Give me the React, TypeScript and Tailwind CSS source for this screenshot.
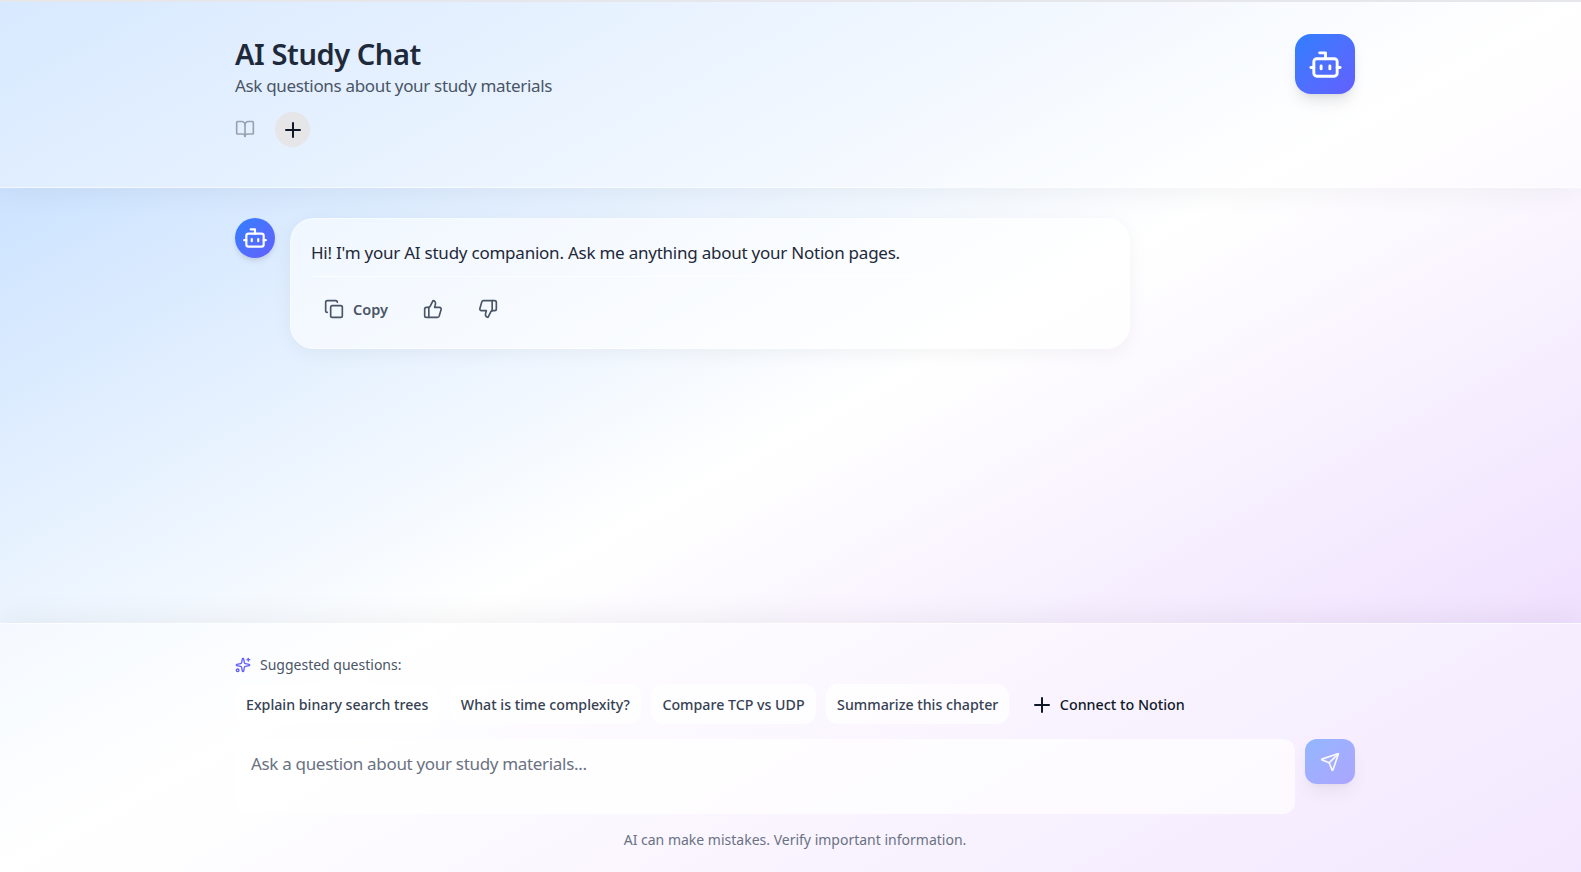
import { BookOpen, Bot, Copy, Plus, Send, Sparkles, ThumbsDown, ThumbsUp } from "lucide-react";

const suggestions = [
  "Explain binary search trees",
  "What is time complexity?",
  "Compare TCP vs UDP",
  "Summarize this chapter",
];

export default function App() {
  return (
    <div className="flex h-screen flex-col overflow-hidden border-t-2 border-gray-200 bg-linear-to-br from-blue-200 via-white to-purple-200 font-['Noto_Sans',sans-serif]">
      {/* header */}
      <header className="relative h-[186px] shrink-0 border-b border-white/60 bg-white/40 shadow-[0_4px_30px_rgba(0,0,0,0.05)]">
        <div className="ml-[235px] flex w-[1120px] items-start justify-between pt-8">
          <div>
            <h1 className="pt-px text-[29px] leading-[38px] font-semibold tracking-[-0.42px] text-gray-800">AI Study Chat</h1>
            <p className="text-[17px] leading-[26px] tracking-[-0.33px] text-gray-600">Ask questions about your study materials</p>
            <div className="mt-[13px] flex items-center gap-5">
              <BookOpen className="-mt-0.5 h-5 w-5 text-gray-400" />
              <button className="flex h-[35px] w-[35px] items-center justify-center rounded-full bg-[#e6e6e9] text-gray-900">
                <Plus className="h-6 w-6" />
              </button>
            </div>
          </div>
          <div className="flex h-[60px] w-[60px] items-center justify-center rounded-2xl bg-linear-to-br from-blue-500 to-indigo-500 shadow-lg">
            <Bot className="h-[35px] w-[35px] text-white" />
          </div>
        </div>
      </header>

      {/* messages */}
      <main className="min-h-0 flex-1 pt-[30px]">
        <div className="ml-[235px] flex w-[1120px] items-start gap-[15px]">
          <div className="flex h-10 w-10 shrink-0 items-center justify-center rounded-full bg-linear-to-br from-blue-500 to-indigo-500 shadow-md">
            <Bot className="h-[26px] w-[26px] text-white" />
          </div>
          <div className="h-[131px] w-[840px] rounded-3xl border border-white/40 bg-white/60 px-5 pt-[22px] shadow-[0_4px_20px_rgba(0,0,0,0.05)]">
            <p className="border-b border-white/70 pb-[11px] text-[17px] leading-6 tracking-[-0.235px] text-gray-800">
              Hi! I'm your AI study companion. Ask me anything about your Notion pages.
            </p>
            <div className="mt-5 flex items-center pl-[13px] text-gray-600">
              <button className="flex items-center gap-[9px] text-[14.5px] font-semibold">
                <Copy className="h-5 w-5" />
                <span className="pt-0.5">Copy</span>
              </button>
              <ThumbsUp className="ml-[35px] h-5 w-5" />
              <ThumbsDown className="ml-[35px] h-5 w-5" />
            </div>
          </div>
        </div>
      </main>

      {/* input area */}
      <footer className="relative h-[249px] shrink-0 border-t border-white/60 bg-white/45 pt-[31px] shadow-[0_-4px_30px_rgba(0,0,0,0.06)]">
        <div className="ml-[235px] w-[1120px]">
          <div className="flex items-center gap-[9px] text-sm leading-5 text-gray-600">
            <Sparkles className="h-4 w-4 text-indigo-500" />
            Suggested questions:
          </div>
          <div className="mt-[9px] flex items-center gap-[10.5px]">
            {suggestions.map((s) => (
              <button key={s} className="h-10 rounded-xl bg-white/70 px-[11px] pt-px text-[14.2px] font-medium text-gray-700">
                {s}
              </button>
            ))}
            <button className="flex h-10 items-center gap-[6px] px-[10px] pt-px text-[14.3px] font-medium text-gray-900">
              <Plus className="h-6 w-6" />
              Connect to Notion
            </button>
          </div>
          <div className="mt-[15px] flex items-start gap-[10px]">
            <div className="h-[75px] flex-1 rounded-xl bg-white/70 px-4 pt-[11px] text-[17px] leading-7 tracking-[-0.32px] text-gray-500">
              Ask a question about your study materials...
            </div>
            <button className="flex h-[45px] w-[50px] items-center justify-center rounded-xl bg-linear-to-br from-blue-500 to-indigo-500 opacity-50 shadow-lg">
              <Send className="h-5 w-5 text-white" />
            </button>
          </div>
          <p className="mt-4 text-center text-sm leading-5 text-gray-500">AI can make mistakes. Verify important information.</p>
        </div>
      </footer>
    </div>
  );
}
